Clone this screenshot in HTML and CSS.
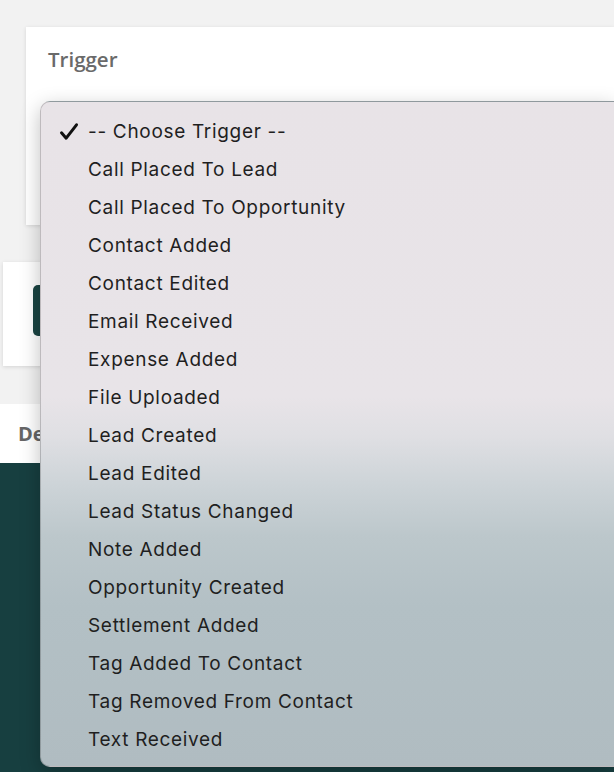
FILE: index.html
```html
<!DOCTYPE html>
<html>
<head>
<meta charset="utf-8">
<link rel="stylesheet" href="styles.css">
</head>
<body>
<div class="page">
  <div class="card card-trigger">
    <div class="label">Trigger</div>
  </div>
  <div class="card card-action">
    <div class="btn"></div>
  </div>
  <div class="strip"><span class="strip-title">Details</span></div>
  <div class="teal"></div>

  <div class="menu">
    <ul class="options">
      <li class="opt selected"><svg class="check" viewBox="0 0 20 20" width="20" height="20"><path d="M2.5 10.8 L7.2 16.2 L17.5 2.8" fill="none" stroke="#111" stroke-width="3" stroke-linecap="round" stroke-linejoin="round"/></svg><span>-- Choose Trigger --</span></li>
      <li class="opt"><span>Call Placed To Lead</span></li>
      <li class="opt"><span>Call Placed To Opportunity</span></li>
      <li class="opt"><span>Contact Added</span></li>
      <li class="opt"><span>Contact Edited</span></li>
      <li class="opt"><span>Email Received</span></li>
      <li class="opt"><span>Expense Added</span></li>
      <li class="opt"><span>File Uploaded</span></li>
      <li class="opt"><span>Lead Created</span></li>
      <li class="opt"><span>Lead Edited</span></li>
      <li class="opt"><span>Lead Status Changed</span></li>
      <li class="opt"><span>Note Added</span></li>
      <li class="opt"><span>Opportunity Created</span></li>
      <li class="opt"><span>Settlement Added</span></li>
      <li class="opt"><span>Tag Added To Contact</span></li>
      <li class="opt"><span>Tag Removed From Contact</span></li>
      <li class="opt"><span>Text Received</span></li>
    </ul>
  </div>
</div>
</body>
</html>
```
FILE: styles.css
```css
html, body {
  margin: 0;
  padding: 0;
  width: 614px;
  height: 772px;
  overflow: hidden;
  background: #f2f2f2;
}
.page {
  position: relative;
  width: 614px;
  height: 772px;
  overflow: hidden;
  display: flex;
  flex-direction: column;
}
.card {
  background: #fff;
  box-shadow: 0 1px 4px rgba(0,0,0,0.12);
}
.card-trigger {
  margin: 27px 0 0 26px;
  height: 198px;
  padding: 0 0 0 22px;
  box-sizing: border-box;
}
.label {
  font-family: "Open Sans", sans-serif;
  font-weight: 600;
  font-size: 20.5px;
  color: #6a6a6a;
  margin-top: 18px;
  line-height: 28px;
}
.card-action {
  margin: 37px 0 0 3px;
  height: 104px;
  padding: 23px 0 0 30px;
  box-sizing: border-box;
}
.btn {
  width: 160px;
  height: 51px;
  background: #1b4543;
  border-radius: 5px;
}
.strip {
  margin-top: 38px;
  height: 59px;
  background: #fff;
  display: flex;
  align-items: center;
  padding-left: 18px;
}
.strip-title {
  font-family: "Open Sans", sans-serif;
  font-weight: 700;
  font-size: 20px;
  color: #666;
}
.teal {
  flex: 1;
  background: #173f40;
}
.menu {
  position: absolute;
  left: 40px;
  right: 0;
  top: 101px;
  height: 666px;
  box-sizing: border-box;
  border: 1px solid rgba(0,0,0,0.18);
  border-right: none;
  border-radius: 10px 0 0 10px;
  background: linear-gradient(to bottom,
    #e8e3e7 0px,
    #e8e4e8 295px,
    #dfdfe3 335px,
    #ccd3d7 385px,
    #bcc7cb 435px,
    #b3c0c5 505px,
    #b0bcc1 100%);
  box-shadow: 0 6px 20px rgba(0,0,0,0.25);
}
.options {
  list-style: none;
  margin: 0;
  padding: 10px 0 0 0;
}
.opt {
  position: relative;
  height: 38px;
  display: flex;
  align-items: center;
  padding-left: 47px;
  font-family: Inter, "Noto Sans", sans-serif;
  font-size: 19px;
  color: #1f1f1f;
  letter-spacing: 0.68px;
}
.check {
  position: absolute;
  left: 18px;
  top: 10px;
}
```
